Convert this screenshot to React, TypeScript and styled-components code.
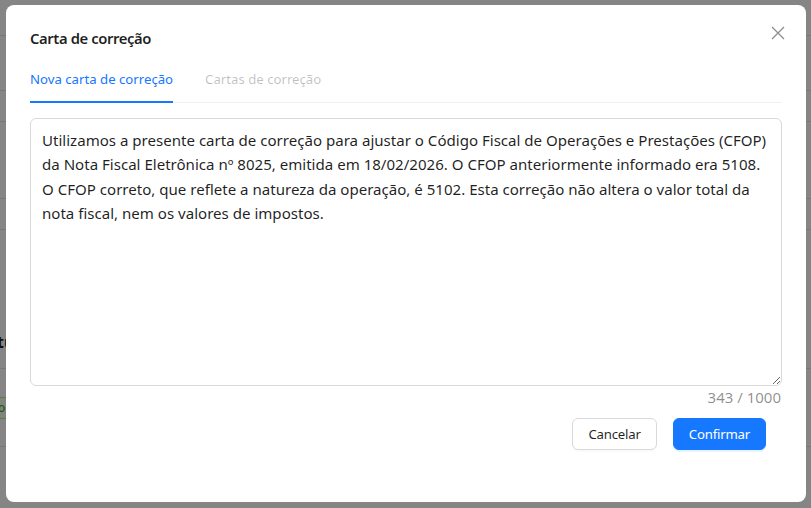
import React from "react";
import styled, { createGlobalStyle } from "styled-components";

const GlobalStyle = createGlobalStyle`
  html, body { margin: 0; padding: 0; }
  body {
    font-family: "Noto Sans", "Open Sans", Arial, sans-serif;
    background: #ffffff;
    width: 811px;
    height: 508px;
    overflow: hidden;
  }
  * { box-sizing: border-box; }
`;

const Page = styled.div`
  width: 811px;
  height: 508px;
  background: #ffffff;
  display: flex;
  flex-direction: column;
`;

const BgRow = styled.div<{ $h: number }>`
  height: ${(p) => p.$h}px;
  border-bottom: 1px solid #e6e6e6;
  display: flex;
  align-items: center;
  flex-shrink: 0;
`;

const BgHeading = styled.span`
  font-size: 16px;
  font-weight: 700;
  color: #1f1f1f;
  margin-left: -3px;
  margin-top: 86px;
`;

const BgTag = styled.span`
  display: inline-block;
  height: 22px;
  line-height: 20px;
  padding: 0 7px;
  margin-left: -10px;
  border: 1px solid #b7eb8f;
  background: #f6ffed;
  color: #389e0d;
  font-size: 12px;
`;

const Mask = styled.div`
  position: fixed;
  inset: 0;
  background: rgba(0, 0, 0, 0.48);
`;

const Wrap = styled.div`
  position: fixed;
  inset: 0;
  padding: 5px 5px 6px 6px;
  display: flex;
`;

const Modal = styled.div`
  position: relative;
  flex: 1;
  background: #ffffff;
  border-radius: 8px;
  padding: 20px 24px 0 24px;
  display: flex;
  flex-direction: column;
`;

const Header = styled.div`
  height: 24px;
  margin-bottom: 7px;
  display: flex;
  align-items: center;
`;

const Title = styled.div`
  padding-top: 2px;
  font-size: 14.8px;
  font-weight: 600;
  letter-spacing: -0.4px;
  line-height: 24px;
  color: rgba(0, 0, 0, 0.88);
`;

const Close = styled.button`
  position: absolute;
  top: 17px;
  right: 17px;
  width: 22px;
  height: 22px;
  padding: 0;
  border: none;
  background: transparent;
  display: flex;
  align-items: center;
  justify-content: center;
  color: rgba(0, 0, 0, 0.45);
  cursor: pointer;
`;

const TabNav = styled.div`
  display: flex;
  gap: 32px;
  border-bottom: 1px solid #f0f0f0;
`;

const Tab = styled.div<{ $active?: boolean; $disabled?: boolean }>`
  position: relative;
  padding: 12px 0;
  font-size: 13.2px;
  line-height: 22px;
  color: ${(p) =>
    p.$active ? "#1677ff" : p.$disabled ? "rgba(0,0,0,0.25)" : "rgba(0,0,0,0.88)"};
  &::after {
    content: "";
    display: ${(p) => (p.$active ? "block" : "none")};
    position: absolute;
    left: 0;
    right: 0;
    bottom: -1px;
    height: 2px;
    background: #1677ff;
  }
`;

const TextArea = styled.textarea`
  margin-top: 15px;
  width: 100%;
  height: 268px;
  padding: 9px 11px;
  border: 1px solid #d9d9d9;
  border-radius: 6px;
  font-family: "Noto Sans", "Open Sans", Arial, sans-serif;
  font-size: 15.07px;
  line-height: 24.4px;
  color: rgba(0, 0, 0, 0.88);
  resize: vertical;
  outline: none;
  display: block;
`;

const Counter = styled.div`
  text-align: right;
  padding-right: 1px;
  font-size: 15px;
  line-height: 22px;
  color: rgba(0, 0, 0, 0.45);
`;

const Footer = styled.div`
  margin-top: 10px;
  padding-right: 16px;
  display: flex;
  justify-content: flex-end;
  gap: 16px;
`;

const Button = styled.button<{ $primary?: boolean }>`
  height: 32px;
  padding: 0 15px;
  border-radius: 6px;
  font-family: "Noto Sans", "Open Sans", Arial, sans-serif;
  font-size: 13.2px;
  letter-spacing: -0.2px;
  border: 1px solid ${(p) => (p.$primary ? "#1677ff" : "#d9d9d9")};
  background: ${(p) => (p.$primary ? "#1677ff" : "#ffffff")};
  color: ${(p) => (p.$primary ? "#ffffff" : "rgba(0,0,0,0.88)")};
  box-shadow: ${(p) =>
    p.$primary ? "0 2px 0 rgba(5,145,255,0.1)" : "0 2px 0 rgba(0,0,0,0.02)"};
  cursor: pointer;
`;

const TEXT =
  "Utilizamos a presente carta de correção para ajustar o Código Fiscal de Operações e Prestações (CFOP) da Nota Fiscal Eletrônica nº 8025, emitida em 18/02/2026. O CFOP anteriormente informado era 5108. O CFOP correto, que reflete a natureza da operação, é 5102. Esta correção não altera o valor total da nota fiscal, nem os valores de impostos.";

export default function App() {
  return (
    <>
      <GlobalStyle />
      <Page>
        <BgRow $h={36} />
        <BgRow $h={55} />
        <BgRow $h={31} />
        <BgRow $h={77} />
        <BgRow $h={31} />
        <BgRow $h={139}>
          <BgHeading>tu</BgHeading>
        </BgRow>
        <BgRow $h={78}>
          <BgTag>o</BgTag>
        </BgRow>
      </Page>
      <Mask />
      <Wrap>
        <Modal>
          <Close aria-label="Fechar">
            <svg width="14" height="14" viewBox="0 0 14 14" fill="none">
              <path d="M1 1L13 13M13 1L1 13" stroke="currentColor" strokeWidth="1.3" />
            </svg>
          </Close>
          <Header>
            <Title>Carta de correção</Title>
          </Header>
          <TabNav>
            <Tab $active>Nova carta de correção</Tab>
            <Tab $disabled>Cartas de correção</Tab>
          </TabNav>
          <TextArea defaultValue={TEXT} maxLength={1000} />
          <Counter>{TEXT.length} / 1000</Counter>
          <Footer>
            <Button>Cancelar</Button>
            <Button $primary>Confirmar</Button>
          </Footer>
        </Modal>
      </Wrap>
    </>
  );
}
